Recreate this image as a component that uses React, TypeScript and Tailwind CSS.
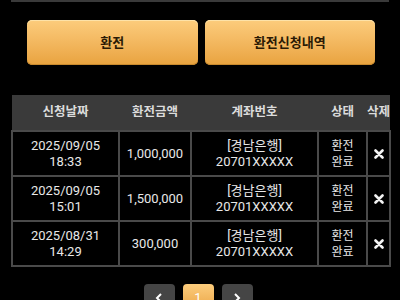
import React from 'react';

const rows = [
  { date: '2025/09/05', time: '18:33', amount: '1,000,000' },
  { date: '2025/09/05', time: '15:01', amount: '1,500,000' },
  { date: '2025/08/31', time: '14:29', amount: '300,000' },
];

function XMark() {
  return (
    <svg width="10" height="10" viewBox="0 0 10 10" className="mx-auto">
      <path d="M1.5 1.5 L8.5 8.5 M8.5 1.5 L1.5 8.5" stroke="#f2f2f2" strokeWidth="2.6" strokeLinecap="round" />
    </svg>
  );
}

export default function App() {
  return (
    <div className="w-[400px] h-[300px] bg-black overflow-hidden font-['Roboto','Noto_Sans_CJK_KR',sans-serif]">
      <div className="mx-[11px] h-[2px] bg-[#3a3a3a]" />

      {/* action buttons */}
      <div className="grid grid-cols-2 gap-[7px] pl-[27px] pr-[25px] mt-[18px]">
        <button className="h-[45px] rounded-[5px] bg-gradient-to-b from-[#fccc7c] to-[#e9a33e] shadow-[inset_0_1px_0_#fde2a8,inset_0_-1px_0_#c98a2e] text-[13px] font-bold text-[#2a1a05]">
          환전
        </button>
        <button className="h-[45px] rounded-[5px] bg-gradient-to-b from-[#fccc7c] to-[#e9a33e] shadow-[inset_0_1px_0_#fde2a8,inset_0_-1px_0_#c98a2e] text-[13px] font-bold text-[#2a1a05]">
          환전신청내역
        </button>
      </div>

      {/* history table */}
      <table className="mt-[30px] ml-[11px] w-[378px] table-fixed border-collapse text-[#e8e8e8]">
        <colgroup>
          <col className="w-[107px]" />
          <col className="w-[72px]" />
          <col className="w-[127px]" />
          <col className="w-[49px]" />
          <col className="w-[23px]" />
        </colgroup>
        <thead>
          <tr className="h-[36px] bg-[#3a3a3a] text-[12.5px] font-bold text-[#dcdcdc]">
            <th className="font-bold">신청날짜</th>
            <th className="font-bold">환전금액</th>
            <th className="font-bold">계좌번호</th>
            <th className="font-bold">상태</th>
            <th className="font-bold whitespace-nowrap">삭제</th>
          </tr>
        </thead>
        <tbody className="text-[13px] leading-[16px]">
          {rows.map((r, i) => (
            <tr key={i} className="h-[45px]">
              <td className="border-2 border-[#4a4a4a] text-center">
                {r.date}
                <br />
                {r.time}
              </td>
              <td className="border-2 border-[#4a4a4a] text-center">{r.amount}</td>
              <td className="border-2 border-[#4a4a4a] text-center">
                [경남은행]
                <br />
                20701XXXXX
              </td>
              <td className="border-2 border-[#4a4a4a] text-center text-[12px]">
                환전
                <br />
                완료
              </td>
              <td className="border-2 border-[#4a4a4a] text-center">
                <XMark />
              </td>
            </tr>
          ))}
        </tbody>
      </table>

      {/* pagination */}
      <div className="flex justify-center gap-[8px] mt-[17px] pr-[4px]">
        <button className="w-[31px] h-[28px] rounded-[4px] bg-[#454545] flex items-center justify-center">
          <svg width="10" height="12" viewBox="0 0 10 12">
            <path d="M7 2 L3 6 L7 10" stroke="#fff" strokeWidth="2" fill="none" />
          </svg>
        </button>
        <button className="w-[31px] h-[28px] rounded-[4px] bg-gradient-to-b from-[#fccc7c] to-[#e9a33e] text-[13px] text-white">
          1
        </button>
        <button className="w-[31px] h-[28px] rounded-[4px] bg-[#454545] flex items-center justify-center">
          <svg width="10" height="12" viewBox="0 0 10 12">
            <path d="M3 2 L7 6 L3 10" stroke="#fff" strokeWidth="2" fill="none" />
          </svg>
        </button>
      </div>
    </div>
  );
}
